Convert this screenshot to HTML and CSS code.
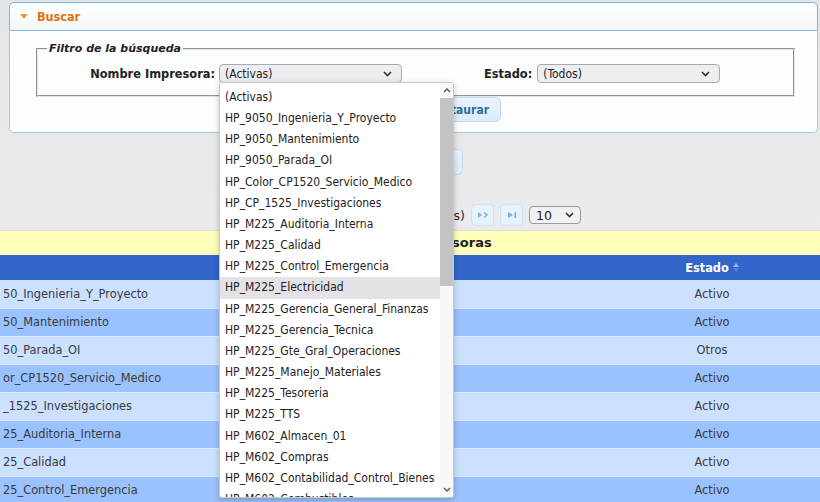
FILE: index.html
```html
<!DOCTYPE html>
<html lang="es">
<head>
<meta charset="utf-8">
<title>Impresoras</title>
<link rel="stylesheet" href="styles.css">
</head>
<body>
<div class="top">
  <div class="panel-head">
    <svg class="tri" width="8" height="5" viewBox="0 0 8 5"><polygon points="0,0 8,0 4,5" fill="#f29a2e"/></svg>
    <span>Buscar</span>
  </div>
  <div class="panel-body">
    <fieldset class="filter">
      <legend>Filtro de la búsqueda</legend>
      <div class="filter-row">
        <label class="lbl lbl-nombre">Nombre Impresora:</label>
        <div class="sel sel-nombre"><span>(Activas)</span>
          <svg width="9" height="6" viewBox="0 0 9 6"><polyline points="1,1 4.5,4.5 8,1" fill="none" stroke="#333" stroke-width="1.6"/></svg>
        </div>
        <label class="lbl lbl-estado">Estado:</label>
        <div class="sel sel-estado"><span>(Todos)</span>
          <svg width="9" height="6" viewBox="0 0 9 6"><polyline points="1,1 4.5,4.5 8,1" fill="none" stroke="#333" stroke-width="1.6"/></svg>
        </div>
      </div>
    </fieldset>
    <div class="btn-row">
      <button class="btn">Buscar</button>
      <button class="btn">Restaurar</button>
    </div>
  </div>
</div>

<div class="actions">
  <button class="btn btn-tall">Nueva Impresora</button>
</div>

<div class="pager">
  <span class="pager-text">Página 1 de 3 (25 registros)</span>
  <span class="pbtn"><svg width="12" height="8" viewBox="0 0 12 8"><polygon points="1,1 5,4 1,7" fill="#7fb0dc"/><polyline points="7,1.5 10,4 7,6.5" fill="none" stroke="#7fb0dc" stroke-width="1.4"/></svg></span>
  <span class="pbtn"><svg width="12" height="8" viewBox="0 0 12 8"><polygon points="2,1 7,4 2,7" fill="#7fb0dc"/><rect x="8.5" y="1" width="1.6" height="6" fill="#7fb0dc"/></svg></span>
  <div class="sel sel-size"><span>10</span>
    <svg width="9" height="6" viewBox="0 0 9 6"><polyline points="1,1 4.5,4.5 8,1" fill="none" stroke="#333" stroke-width="1.6"/></svg>
  </div>
</div>

<div class="caption">Listado de Impresoras</div>
<table class="grid">
  <thead>
    <tr><th class="c-name">Nombre</th><th class="c-state">Estado <svg width="6" height="9" viewBox="0 0 6 9"><polygon points="0,4 3,0 6,4" fill="#8fb9ef"/><polygon points="0,5 3,9 6,5" fill="#4f7fd6"/></svg></th></tr>
  </thead>
  <tbody>
    <tr class="odd"><td>50_Ingenieria_Y_Proyecto</td><td class="state">Activo</td></tr>
    <tr class="even"><td>50_Mantenimiento</td><td class="state">Activo</td></tr>
    <tr class="odd"><td>50_Parada_OI</td><td class="state">Otros</td></tr>
    <tr class="even"><td>or_CP1520_Servicio_Medico</td><td class="state">Activo</td></tr>
    <tr class="odd"><td>_1525_Investigaciones</td><td class="state">Activo</td></tr>
    <tr class="even"><td>25_Auditoria_Interna</td><td class="state">Activo</td></tr>
    <tr class="odd"><td>25_Calidad</td><td class="state">Activo</td></tr>
    <tr class="even"><td>25_Control_Emergencia</td><td class="state">Activo</td></tr>
  </tbody>
</table>

<div class="dropdown">
  <ul class="opts">
    <li>(Activas)</li>
    <li>HP_9050_Ingenieria_Y_Proyecto</li>
    <li>HP_9050_Mantenimiento</li>
    <li>HP_9050_Parada_OI</li>
    <li>HP_Color_CP1520_Servicio_Medico</li>
    <li>HP_CP_1525_Investigaciones</li>
    <li>HP_M225_Auditoria_Interna</li>
    <li>HP_M225_Calidad</li>
    <li>HP_M225_Control_Emergencia</li>
    <li class="hl">HP_M225_Electricidad</li>
    <li>HP_M225_Gerencia_General_Finanzas</li>
    <li>HP_M225_Gerencia_Tecnica</li>
    <li>HP_M225_Gte_Gral_Operaciones</li>
    <li>HP_M225_Manejo_Materiales</li>
    <li>HP_M225_Tesoreria</li>
    <li>HP_M225_TTS</li>
    <li>HP_M602_Almacen_01</li>
    <li>HP_M602_Compras</li>
    <li>HP_M602_Contabilidad_Control_Bienes</li>
    <li>HP_M602_Combustibles</li>
  </ul>
  <div class="sbar">
    <svg class="arr" width="8" height="5" viewBox="0 0 8 5"><polyline points="1,4 4,1 7,4" fill="none" stroke="#555" stroke-width="1.3"/></svg>
    <div class="thumb"></div>
    <div class="track"></div>
    <svg class="arr" width="8" height="5" viewBox="0 0 8 5"><polyline points="1,1 4,4 7,1" fill="none" stroke="#555" stroke-width="1.3"/></svg>
  </div>
</div>
</body>
</html>
```
FILE: styles.css
```css
* { box-sizing: border-box; }
html, body { margin: 0; padding: 0; }
body {
  width: 820px;
  height: 502px;
  overflow: hidden;
  position: relative;
  background: linear-gradient(#e4e5e7, #ebebed 230px);
  font-family: "DejaVu Sans", Verdana, sans-serif;
  font-size: 11.4px;
  color: #222;
}

/* search panel */
.top { padding: 2px 2px 0 9px; }
.panel-head {
  height: 29px;
  border: 1px solid #79b7e7;
  border-radius: 5px 5px 0 0;
  background: linear-gradient(#fdfefe, #f3f7fa);
  display: flex;
  align-items: center;
  padding-left: 10px;
  color: #e17009;
  font-family: "DejaVu Sans Condensed", "DejaVu Sans", sans-serif;
  font-weight: bold;
  font-size: 12.5px;
}
.tri { margin-right: 9px; }
.panel-body {
  border: 1px solid #a6c9e2;
  border-top: none;
  border-radius: 0 0 5px 5px;
  background: #fcfdfd;
  padding: 11px 22px 10px 26px;
}
.filter {
  margin: 0;
  padding: 0;
  border: 2px groove #e6e6e6;
}
.filter legend {
  margin-left: 9px;
  padding: 0 2px;
  font-weight: bold;
  font-style: italic;
  font-size: 11px;
  line-height: 14px;
}
.filter-row {
  display: flex;
  align-items: center;
  padding: 8px 0 12px;
}
.lbl { font-weight: bold; }
.lbl-nombre { width: 177px; text-align: right; margin-right: 4px; }
.lbl-estado { margin-left: 82px; margin-right: 5px; }

.sel {
  display: flex;
  align-items: center;
  justify-content: space-between;
  height: 19px;
  border: 1px solid #a9a9ad;
  border-radius: 4px;
  background: #eeedf1;
  padding: 0 9px 0 5px;
  font-family: "DejaVu Sans Condensed", "DejaVu Sans", sans-serif;
  font-size: 12px;
  color: #222;
}
.sel-nombre { width: 183px; }
.sel-estado { width: 183px; }

.btn-row {
  display: flex;
  justify-content: flex-end;
  gap: 4px;
  padding-right: 294px;
}
.btn {
  height: 25px;
  padding: 0 11px;
  border: 1px solid #c5dbec;
  border-radius: 5px;
  background: linear-gradient(#e8f3fd, #dbecfb);
  color: #2e6e9e;
  font-family: "DejaVu Sans Condensed", "DejaVu Sans", sans-serif;
  font-weight: bold;
  font-size: 12px;
}

/* gray zone */
.actions {
  display: flex;
  justify-content: flex-end;
  padding: 16px 357px 0 0;
}
.btn-tall { height: 26px; }

.pager {
  display: flex;
  justify-content: flex-end;
  align-items: center;
  gap: 6px;
  padding: 29px 239px 0 0;
  height: 51px;
}
.pager-text { font-size: 12.5px; color: #222; }
.pbtn {
  width: 23px;
  height: 22px;
  border: 1px solid #cfe2f2;
  border-radius: 4px;
  background: #e6f2fd;
  display: flex;
  align-items: center;
  justify-content: center;
}
.sel-size {
  width: 52px;
  height: 18px;
  background: #f1f0f3;
  border-color: #9a9a9e;
  font-family: "DejaVu Sans", sans-serif;
  font-size: 12.5px;
  padding: 0 6px;
}

/* table */
.caption {
  margin-top: 4px;
  height: 25px;
  border-top: 1px solid #dcdcd0;
  background: #ffffbb;
  text-align: center;
  font-weight: bold;
  font-size: 13px;
  line-height: 24px;
  color: #222;
}
.grid {
  width: 820px;
  border-collapse: collapse;
  table-layout: fixed;
}
.grid th {
  height: 25px;
  padding: 0;
  background: #3165c9;
  color: #fff;
  font-weight: bold;
  font-size: 11.4px;
}
.c-name { width: 604px; }
.grid td {
  height: 28px;
  padding: 0 0 0 3px;
  border-bottom: 1px solid #dfeafd;
  color: #3a3a3a;
  white-space: nowrap;
}
.grid td.state { text-align: center; padding: 0; }
.odd td { background: #cce0ff; }
.even td { background: #99c2ff; }

/* open select popup */
.dropdown {
  position: absolute;
  left: 219px;
  top: 82px;
  width: 235px;
  height: 416px;
  background: #fff;
  border: 1px solid #c9c9c9;
  border-radius: 3px;
  box-shadow: 0 2px 6px rgba(0, 0, 0, 0.22);
  display: flex;
  overflow: hidden;
}
.opts {
  list-style: none;
  margin: 0;
  padding: 4px 0 0;
  flex: 1;
  overflow: hidden;
  font-family: "DejaVu Sans Condensed", "DejaVu Sans", sans-serif;
  font-size: 12px;
  color: #222;
}
.opts li {
  height: 21.17px;
  line-height: 21.17px;
  padding-left: 5px;
  white-space: nowrap;
}
.opts li.hl { background: #e4e2e7; }
.sbar {
  width: 13px;
  display: flex;
  flex-direction: column;
  align-items: center;
  background: #f8f8f8;
}
.arr { margin: 5px 0; flex: none; }
.thumb {
  width: 13px;
  height: 188px;
  background: #c3c3c3;
}
.track { flex: 1; }
```
